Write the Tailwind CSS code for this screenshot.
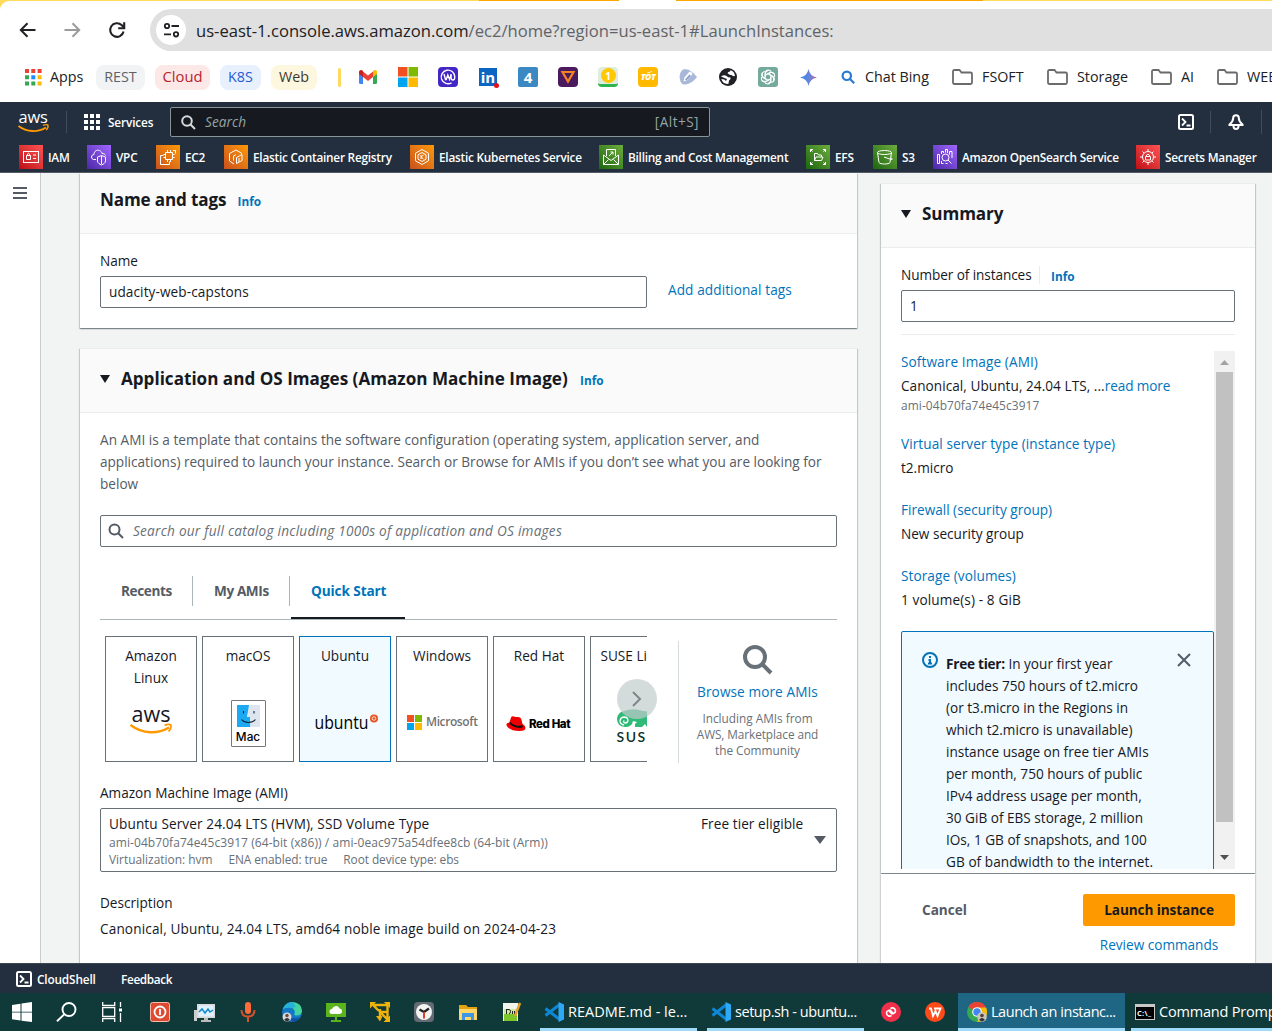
<!DOCTYPE html>
<html lang="en">
<head>
<meta charset="utf-8">
<title>Launch an instance | EC2 | us-east-1</title>
<script src="https://cdn.jsdelivr.net/npm/@tailwindcss/browser@4"></script>
</head>
<body class="flex h-[1031px] w-[1272px] flex-col overflow-hidden whitespace-nowrap bg-[#f2f3f3] font-['Open_Sans',sans-serif] text-[13.6px] leading-[22px] text-[#16191f]">

<!-- Browser tab strip edge -->
<div class="flex h-px shrink-0 bg-[#ffdb5c]">
  <div class="ml-[479px] w-[140px] bg-[#ffa500]"></div>
  <div class="w-[57px] bg-white"></div>
  <div class="w-[307px] bg-[#ffa500]"></div>
</div>

<!-- Browser toolbar -->
<div class="h-[101px] shrink-0 bg-[#ffdb5c]">
  <div class="h-full rounded-tl-[9px] bg-white pt-2">
    <div class="flex h-[42px] items-center">
      <svg class="ml-[19px] size-[18px]" viewBox="0 0 18 18" fill="none" stroke="#202124" stroke-width="2"><path d="M16.5 9H2M8.5 2.3L1.8 9l6.7 6.7"/></svg>
      <svg class="ml-[26px] size-[18px]" viewBox="0 0 18 18" fill="none" stroke="#9b9b9b" stroke-width="2"><path d="M1.5 9H16M9.5 2.3L16.2 9l-6.7 6.7"/></svg>
      <svg class="ml-[27px] size-[18px]" viewBox="0 0 18 18" fill="none" stroke="#202124" stroke-width="2.1"><path d="M15.6 10.6A6.8 6.8 0 1 1 13.6 4L16 6.4"/><path d="M16.2 1.2v6h-6"/></svg>
      <div class="ml-6 flex h-[42px] flex-1 items-center rounded-l-full bg-[#e0e0e0] pl-[6px]">
        <div class="flex size-[30px] items-center justify-center rounded-full bg-white">
          <svg class="size-[17px]" viewBox="0 0 17 17" fill="none" stroke="#202124" stroke-width="1.8"><circle cx="4" cy="4" r="2.2"/><path d="M8.5 4H16M1 12.3h7"/><circle cx="13" cy="12.3" r="2.2"/></svg>
        </div>
        <div class="ml-[10px] mt-0.5 text-[16.6px] leading-6 text-[#5f6368]"><span class="text-[#202124]">us-east-1.console.aws.amazon.com</span>/ec2/home?region=us-east-1#LaunchInstances:</div>
      </div>
    </div>

    <!-- Bookmarks -->
    <div class="mt-[13px] flex h-[26px] items-center text-[14.3px] leading-[23px] text-[#202124]">
      <svg class="ml-[25px] size-[17px]" viewBox="0 0 17 17"><path fill="#ea4335" d="M0 0h4v4H0zM6.3 0h4v4h-4zM12.6 0h4v4h-4z"/><path fill="#34a853" d="M0 6.3h4v4H0zM0 12.6h4v4H0zM6.3 12.6h4v4h-4z"/><path fill="#1a8cff" d="M6.3 6.3h4v4h-4z"/><path fill="#fbbc05" d="M12.6 6.3h4v4h-4zM12.6 12.6h4v4h-4z"/></svg>
      <div class="mb-0.5 ml-2 w-[46px]">Apps</div>
      <div class="flex h-[25px] w-[49px] justify-center rounded-lg bg-[#f1f3f4] text-[#5f6368]">REST</div>
      <div class="ml-[10px] flex h-[25px] w-[55px] justify-center rounded-lg bg-[#fce8e6] text-[14.8px] text-[#b8232f]">Cloud</div>
      <div class="ml-[10px] flex h-[25px] w-[41px] justify-center rounded-lg bg-[#e8f0fe] text-[#2a5bd0]">K8S</div>
      <div class="ml-[10px] flex h-[25px] w-[46px] justify-center rounded-lg bg-[#fef7e0] text-[#3c3a30]">Web</div>
      <div class="ml-[21px] h-[19px] w-[3px] rounded-sm bg-[#ffd95e]"></div>
      <svg class="ml-[18px] h-[14px] w-[18px]" viewBox="0 0 18 14"><path fill="#4285f4" d="M0 2.5V12.500Q0 14 1.500 14H4V5z"/><path fill="#34a853" d="M18 2.500V12.500Q18 14 16.500 14H14V5z"/><path fill="#ea4335" d="M4 7V1.500L9 5.400 14 1.500V7L9 11z"/><path fill="#c5221f" d="M0 4V2C0 .2 2.200-.7 4 1v6z"/><path fill="#fbbc04" d="M18 4V2C18 .2 15.800-.7 14 1v6z"/></svg>
      <svg class="ml-[21px] size-5" viewBox="0 0 20 20"><path fill="#f25022" d="M0 0h9.500v9.500H0z"/><path fill="#7fba00" d="M10.500 0H20v9.500h-9.500z"/><path fill="#00a4ef" d="M0 10.500h9.500V20H0z"/><path fill="#ffb900" d="M10.500 10.500H20V20h-9.500z"/></svg>
      <svg class="ml-5 size-5" viewBox="0 0 20 20" fill="none"><rect width="20" height="20" rx="4" fill="#4326c4"/><path d="M13.500 15.800A6.800 6.800 0 1 1 16.800 10c0 2-.8 3-2 3-1.300 0-1.800-1.200-1.800-3.500V7" stroke="#fff" stroke-width="1.400"/><path d="M6 7l1.500 5.500h.8L9.800 8l1.800 4.500L13 8" stroke="#fff" stroke-width="1.400"/></svg>
      <div class="relative ml-[21px] flex h-[18px] w-[18px] items-center justify-center bg-[#0a66c2] text-[15px] font-bold leading-none text-white">in<div class="absolute -bottom-0.5 -right-0.5 size-[5px] rounded-full bg-[#e0101f]"></div></div>
      <div class="ml-[21px] flex size-5 items-center justify-center rounded-[2px] bg-[#3b88c3] text-[15px] font-bold leading-none text-white">4</div>
      <svg class="ml-5 size-5" viewBox="0 0 20 20" fill="none"><rect width="20" height="20" rx="4" fill="#4b1a5e"/><path d="M4.500 5h11L10 14.500z" stroke="#f58220" stroke-width="2.200"/></svg>
      <div class="ml-5 flex size-5 items-center justify-center rounded-[4px] border-b-[3px] border-[#2db551] bg-[#dfece0]"><div class="flex size-[15px] items-center justify-center rounded-full bg-[#ffc800] text-[10px] font-bold leading-none text-white">1</div></div>
      <div class="ml-5 flex size-5 items-center justify-center rounded-[4px] bg-[#ffba00] text-[8.500px] font-extrabold italic leading-5 tracking-[-0.4px] text-white">TỐT</div>
      <svg class="ml-5 h-4 w-[19px]" viewBox="0 0 19 16"><path fill="#a9b7d8" d="M5 .5C10-.5 14 2 19 8c-4 5-9 8-14 7.500C1 13 0 4 5 .5z"/><path d="M5.500 12.500l1-4 5-6q2.500 0 3 2.500l-5 6z" fill="#fff"/><path d="M7 10.500l4.500-5 1.500 1.500-4.500 4.500z" fill="#8fa0cc"/></svg>
      <svg class="ml-[22px] size-[18px]" viewBox="0 0 18 18"><circle cx="9" cy="9" r="9" fill="#202124"/><path fill="#fff" d="M2 8.500Q5 6.500 7.500 8q1.500 1.500 4 1.500.5 2-1.500 3l-.5 3.300Q4 16.500 2.300 11l3 .5L7 13l1-2-2.500-1zM8.500 5Q9 3.500 11 3.500l.5-1.300Q15.500 3.500 16 8q-2.500.5-3.500-1-2 .5-4-2z"/></svg>
      <svg class="ml-[21px] size-5" viewBox="0 0 20 20" fill="none"><rect width="20" height="20" rx="3" fill="#74aa9c"/><g stroke="#fff" stroke-width="1.100"><path id="k" d="M7.200 10V6.200q.3-3 3-3.200 2 .1 3 1.600M7.200 8.300l4-2.300q2.800-1.300 4.600 1"/><use href="#k" transform="rotate(60 10 10)"/><use href="#k" transform="rotate(120 10 10)"/><use href="#k" transform="rotate(180 10 10)"/><use href="#k" transform="rotate(240 10 10)"/><use href="#k" transform="rotate(300 10 10)"/></g></svg>
      <svg class="ml-[22px] size-[17px]" viewBox="0 0 17 17"><defs><linearGradient id="gem"><stop stop-color="#2f8bf0"/><stop offset=".6" stop-color="#6d83d8"/><stop offset="1" stop-color="#c76a80"/></linearGradient></defs><path fill="url(#gem)" d="M8.500 0Q9.800 7.200 17 8.500 9.800 9.800 8.500 17 7.200 9.800 0 8.500 7.200 7.200 8.500 0z"/></svg>
      <svg class="ml-[24px] size-[14px]" viewBox="0 0 14 14" fill="none" stroke="#2a7bd0" stroke-width="2.200"><circle cx="5.800" cy="5.800" r="4.200"/><path d="M9 9l4.200 4.200"/></svg>
      <div class="mb-0.5 ml-[10px] w-[87px]">Chat Bing</div>
      <svg class="h-4 w-[21px]" viewBox="0 0 21 16" fill="none" stroke="#6b6b6b" stroke-width="1.800"><path d="M1 13.500v-11Q1 1 2.500 1H7.500l2 2.500h9Q20 3.500 20 5v8.500Q20 15 18.500 15h-16Q1 15 1 13.500z"/></svg>
      <div class="mb-0.5 ml-[9px] w-[65px]">FSOFT</div>
      <svg class="h-4 w-[21px]" viewBox="0 0 21 16" fill="none" stroke="#6b6b6b" stroke-width="1.800"><path d="M1 13.500v-11Q1 1 2.500 1H7.500l2 2.500h9Q20 3.500 20 5v8.500Q20 15 18.500 15h-16Q1 15 1 13.500z"/></svg>
      <div class="mb-0.5 ml-[9px] w-[74px]">Storage</div>
      <svg class="h-4 w-[21px]" viewBox="0 0 21 16" fill="none" stroke="#6b6b6b" stroke-width="1.800"><path d="M1 13.500v-11Q1 1 2.500 1H7.500l2 2.500h9Q20 3.500 20 5v8.500Q20 15 18.500 15h-16Q1 15 1 13.500z"/></svg>
      <div class="mb-0.5 ml-[9px] w-9">AI</div>
      <svg class="h-4 w-[21px] shrink-0" viewBox="0 0 21 16" fill="none" stroke="#6b6b6b" stroke-width="1.800"><path d="M1 13.500v-11Q1 1 2.500 1H7.500l2 2.500h9Q20 3.500 20 5v8.500Q20 15 18.500 15h-16Q1 15 1 13.500z"/></svg>
      <div class="mb-0.5 ml-[9px] w-[24px]">WEB</div>
    </div>
  </div>
</div>

<!-- AWS navigation -->
<header class="h-[71px] shrink-0 border-b border-[#545b64] bg-[#232f3e] text-[11.8px] font-semibold tracking-[-0.230px] text-white">
  <div class="flex h-10 items-center">
    <svg class="ml-[18px] h-[24px] w-[31px] overflow-visible" viewBox="0 0 31 24" fill="none"><text x="0.500" y="12.500" font-size="17" font-weight="500" textLength="29" lengthAdjust="spacingAndGlyphs" fill="#fff">aws</text><path d="M.5 16C9 22.500 20 22.500 28 17.500" stroke="#f90" stroke-width="1.900"/><path d="M25 15.300c2-.7 4-.7 4.800-.3.500 1-.2 3.500-1.600 5" stroke="#f90" stroke-width="1.400"/></svg>
    <div class="ml-[17px] h-[22px] w-px bg-[#414d5c]"></div>
    <svg class="ml-[17px] size-4" viewBox="0 0 16 16" fill="#fff"><path d="M0 0h4v4H0zM6 0h4v4H6zM12 0h4v4h-4zM0 6h4v4H0zM6 6h4v4H6zM12 6h4v4h-4zM0 12h4v4H0zM6 12h4v4H6zM12 12h4v4h-4z"/></svg>
    <div class="ml-2 w-[62px] tracking-[-0.130px]">Services</div>
    <div class="flex h-[30px] w-[540px] items-center rounded-[2px] border border-[#879596] bg-[#161920] pl-[10px] pr-[10px] text-[13.6px] font-normal text-[#95a5a6]">
      <svg class="size-[15px]" viewBox="0 0 15 15" fill="none" stroke="#d5dbdb" stroke-width="2"><circle cx="6" cy="6" r="4.800"/><path d="M9.500 9.500l4.500 4.500"/></svg>
      <span class="ml-[9px] flex-1 italic tracking-[0.100px]">Search</span><span class="tracking-[0.450px]">[Alt+S]</span>
    </div>
    <svg class="ml-[468px] size-4" viewBox="0 0 16 16" fill="none" stroke="#fff" stroke-width="2"><rect x="1" y="1" width="14" height="14" rx="1.500"/><path d="M4 4.500L7.500 8 4 11.500M8.500 11.500h4" stroke-width="1.800"/></svg>
    <div class="ml-4 h-[22px] w-px bg-[#414d5c]"></div>
    <svg class="ml-[17px] size-4" viewBox="0 0 16 16" fill="none" stroke="#fff" stroke-width="2"><path d="M8 1.300c-1.500 0-2.800 1.200-2.800 2.700 0 3-1.200 4.500-3.700 6.500v.5h13v-.5c-2.500-2-3.700-3.500-3.700-6.500 0-1.500-1.300-2.700-2.800-2.700z"/><path d="M5.500 12c0 2 1 3 2.500 3s2.500-1 2.500-3"/></svg>
    <div class="ml-[17px] h-6 w-px bg-[#414d5c]"></div>
  </div>
  <div class="flex h-[30px] items-center pl-[19px]">
    <div class="flex w-[68px] items-center gap-[5px]">
      <svg class="size-6 bg-gradient-to-tr from-[#bd0816] to-[#ff5252]" viewBox="0 0 24 24" fill="none" stroke="#fff"><rect x="4.500" y="6.500" width="15" height="11"/><path d="M7.500 10.500h4v4h-4zM8.500 10.500V9q1-1.500 2 0v1.500M14 10h3M14 13.500h3"/></svg>IAM</div>
    <div class="flex w-[69px] items-center gap-[5px]">
      <svg class="size-6 bg-gradient-to-tr from-[#4d27a8] to-[#a166ff]" viewBox="0 0 24 24" fill="none" stroke="#fff"><path d="M9 14.500H6.500q-2-.5-2-2.500c0-1.500 1-2.300 2.500-2.500C7 6 10 4.500 12.500 5.500c1.500.7 2.500 2 2.500 3 2 0 3 .5 3.500 2"/><path d="M14.500 10.500l4 1.500v4c0 2-2 3-4 4-2-1-4-2-4-4v-4zM14.500 11v8"/></svg>VPC</div>
    <div class="flex w-[68px] items-center gap-[5px]">
      <svg class="size-6 bg-gradient-to-tr from-[#c8511b] to-[#f90]" viewBox="0 0 24 24" fill="none" stroke="#fff"><path d="M9.500 7.500h7v7h-7zM11.500 7.500V5M14.500 7.500V5M11.500 17v-2.500M14.500 17v-2.500M9.500 9.500H7.500M9.500 12.500H7.500M16.500 9.500h2M16.500 12.500h2M17 5.500h2.500v3M7.500 10.500h-3v9h9v-3"/></svg>EC2</div>
    <div class="flex w-[186px] items-center gap-[5px]">
      <svg class="size-6 bg-gradient-to-tr from-[#c8511b] to-[#f90]" viewBox="0 0 24 24" fill="none" stroke="#fff"><path d="M10 19L5.500 16V8.500L12 5l6 3.500"/><path d="M9.500 15.500V11L12 9.500M12.500 18.500v-6l5.500-3v6zM15 17v-4"/></svg>Elastic Container Registry</div>
    <div class="flex w-[189px] items-center gap-[5px]">
      <svg class="size-6 bg-gradient-to-tr from-[#c8511b] to-[#f90]" viewBox="0 0 24 24" fill="none" stroke="#fff"><path d="M12 4.500l6.500 3.700v7.600L12 19.500l-6.500-3.700V8.200z"/><path d="M12 7.500l4 2.300v4.400l-4 2.300-4-2.300V9.800zM11 10v4M13.500 10L11 12l2.500 2"/></svg>Elastic Kubernetes Service</div>
    <div class="flex w-[207px] items-center gap-[5px]">
      <svg class="size-6 bg-gradient-to-tr from-[#1b660f] to-[#6cae3e]" viewBox="0 0 24 24" fill="none" stroke="#fff"><path d="M7.500 11V4.500h9V11M4.500 10v9.500h15V10M4.500 10l7.500 5.500 7.500-5.500M4.500 19.500l5-5M19.500 19.500l-5-5M10 11l4-4M11.500 7H14v2.500"/></svg>Billing and Cost Management</div>
    <div class="flex w-[67px] items-center gap-[5px]">
      <svg class="size-6 bg-gradient-to-tr from-[#1b660f] to-[#6cae3e]" viewBox="0 0 24 24" fill="none" stroke="#fff"><path d="M8.500 15.500v-7h3l1 1.500h3v2M8.500 15.500l1.500-3.500h7l-1.500 3.500zM4.500 7V4.500H7M17 4.500h2.500V7M4.500 17v2.500H7M17 19.500h2.500V17M4.500 4.500l2 2M4.500 19.500l2-2M19.500 19.500l-2-2M19.500 4.500l-2 2"/></svg>EFS</div>
    <div class="flex w-[60px] items-center gap-[5px]">
      <svg class="size-6 bg-gradient-to-tr from-[#1b660f] to-[#6cae3e]" viewBox="0 0 24 24" fill="none" stroke="#fff"><ellipse cx="11.500" cy="7.500" rx="7" ry="2"/><path d="M4.500 7.500l1.500 10c1 2 10 2 11 0l1.500-10M11 12l7 2.500c2 .3 1.500-.8 0-1.500"/></svg>S3</div>
    <div class="flex w-[203px] items-center gap-[5px]">
      <svg class="size-6 bg-gradient-to-tr from-[#4d27a8] to-[#a166ff]" viewBox="0 0 24 24" fill="none" stroke="#fff"><path d="M4.500 18.500V9.500h2v9zM8.500 9V6.500h2V8M12.500 7.500v-3h2v3.500M16.500 9.500v-3h2.500V13M8.500 16v2.500h2M12.500 18.500h2"/><circle cx="12.500" cy="12.500" r="3.500"/><path d="M15 15l3.500 3.500"/></svg>Amazon OpenSearch Service</div>
    <div class="flex items-center gap-[5px]">
      <svg class="size-6 bg-gradient-to-tr from-[#bd0816] to-[#ff5252]" viewBox="0 0 24 24" fill="none" stroke="#fff"><circle cx="12" cy="12" r="5.500"/><path d="M9.500 11.500h5v3.500h-5zM10.500 11.500V10q1.500-1.500 3 0v1.500M12 6.500v-2.500M12 20v-2.500M4 12h2.500M17.500 12H20M6.500 6.500L8 8M17.500 6.500L16 8M6.500 17.500L8 16M17.500 17.500L16 16"/></svg>Secrets Manager</div>
  </div>
</header>

<!-- Page -->
<main class="flex h-[790px] shrink-0 overflow-hidden">
  <nav class="w-[41px] shrink-0 border-r border-[#c6cbcc] bg-white pl-[13px] pt-[14px]">
    <svg class="h-3 w-[14px]" viewBox="0 0 14 12" fill="#545b64"><path d="M0 0h14v2H0zM0 5h14v2H0zM0 10h14v2H0z"/></svg>
  </nav>

  <div class="ml-[39px] w-[777px] shrink-0">
    <section class="h-[155px] bg-white shadow-[0_1px_1px_0_rgba(0,28,36,.3),1px_1px_1px_0_rgba(0,28,36,.15),-1px_1px_1px_0_rgba(0,28,36,.15)]">
      <div class="flex h-[61px] items-baseline border-b border-[#eaeded] bg-[#fafafa] px-5 pt-4">
        <h2 class="w-[137.5px] text-[17.1px] font-bold tracking-[-0.15px]">Name and tags</h2><a class="text-[11.800px] font-bold text-[#0073bb]">Info</a>
      </div>
      <div class="px-5 pt-4">
        <div>Name</div>
        <div class="mt-[4px] flex">
          <div class="flex h-8 w-[547px] items-center rounded-[2px] border border-[#687078] pl-2 tracking-[0.100px]">udacity-web-capstons</div>
          <a class="ml-[21px] mt-[3px] tracking-[0.1px] text-[#0073bb]">Add additional tags</a>
        </div>
      </div>
    </section>

    <section class="mt-5 h-[700px] border-t border-[#eaeded] bg-white shadow-[0_1px_1px_0_rgba(0,28,36,.3),1px_1px_1px_0_rgba(0,28,36,.15),-1px_1px_1px_0_rgba(0,28,36,.15)]">
      <div class="flex h-16 items-baseline border-b border-[#eaeded] bg-[#fafafa] px-5 pt-[19px]">
        <svg class="h-[8px] w-[10px] -translate-y-[2px]" viewBox="0 0 10 8" fill="#16191f"><path d="M0 0h10L5 8z"/></svg>
        <h2 class="ml-[11px] w-[459px] text-[17.1px] font-bold">Application and OS Images (Amazon Machine Image)</h2><a class="text-[11.800px] font-bold text-[#0073bb]">Info</a>
      </div>
      <div class="px-5 pt-4">
        <p class="text-[#545b64]"><span class="tracking-[0.030px]">An AMI is a template that contains the software configuration (operating system, application server, and</span><br>applications) required to launch your instance. Search or Browse for AMIs if you don’t see what you are looking for<br>below</p>
        <div class="mt-5 flex h-8 items-center rounded-[2px] border border-[#687078] pl-[7px] text-[#687078]">
          <svg class="size-4" viewBox="0 0 16 16" fill="none" stroke="#545b64" stroke-width="2"><circle cx="6.500" cy="6.500" r="5"/><path d="M10.200 10.200L15 15"/></svg>
          <span class="ml-[9px] italic tracking-[0.240px]">Search our full catalog including 1000s of application and OS images</span>
        </div>

        <!-- Tabs -->
        <div class="flex h-[73px] border-b border-[#aab7b8] pt-[29px] font-bold text-[#545b64]">
          <div class="h-[30px] w-[93px] border-r border-[#aab7b8] pl-[21px] leading-[30px] tracking-[-0.400px]">Recents</div>
          <div class="h-[30px] w-[97px] border-r border-[#aab7b8] pl-[21px] leading-[30px] tracking-[-0.400px]">My AMIs</div>
          <div class="ml-px h-[43px] w-[114px] border-b-2 border-[#16191f] pl-5 leading-[30px] tracking-[-0.1px] text-[#0073bb]">Quick Start</div>
        </div>

        <!-- Quick start tiles -->
        <div class="flex h-[143px] pt-4">
          <div class="relative ml-[5px] w-[542px] shrink-0">
            <div class="flex gap-[5px] overflow-hidden text-center">
              <div class="h-[126px] w-[92px] shrink-0 border border-[#687078] pt-2">Amazon<br>Linux
                <svg class="mx-auto mt-[18px] h-[28px] w-[42px] overflow-visible" viewBox="0 0 42 28" fill="none"><text x="1.500" y="15" font-size="21" font-weight="500" textLength="39" lengthAdjust="spacingAndGlyphs" fill="#16191f">aws</text><path d="M.5 18C13 27.500 28 27 39 20.500" stroke="#f90" stroke-width="2.400"/><path d="M34.500 18.300c3-1 5.500-1 6.300-.3.500 1.500-.5 4.500-2.300 6.300" stroke="#f90" stroke-width="1.800"/></svg>
              </div>
              <div class="h-[126px] w-[92px] shrink-0 border border-[#687078] pt-2">macOS
                <div class="mx-auto mt-[33px] h-[47px] w-[35px] rounded-[1px] border border-[#777] pt-[4px] font-['Inter'] text-[11.800px] font-medium leading-[20px] text-black">
                  <svg class="mx-auto h-[22px] w-[23px]" viewBox="0 0 23 22" fill="none"><path d="M0 0h13l-3 12h3l.5 10H0z" fill="#1ba9f2"/><path d="M12 0h11v22H13.500L13 12h-3z" fill="#dde6f0"/><path d="M4.500 14.500c3.500 4 10.500 4 14 0M6.500 6v2.500M17 6v2.500" stroke="#123" stroke-width="1.100"/></svg>Mac
                </div>
              </div>
              <div class="h-[126px] w-[92px] shrink-0 border border-[#0073bb] bg-[#f1faff] pt-2">Ubuntu
                <div class="mt-[44px] flex justify-center text-black"><svg class="h-[22px] w-[62px] overflow-visible" viewBox="0 0 62 22"><text x="0.500" y="18" font-size="18" textLength="54" lengthAdjust="spacingAndGlyphs">ubuntu</text><circle cx="60" cy="7.500" r="4" fill="#e95420"/><circle cx="60" cy="7.500" r="1.800" fill="none" stroke="#fff" stroke-width=".8"/></svg></div>
              </div>
              <div class="h-[126px] w-[92px] shrink-0 border border-[#687078] pt-2">Windows
                <div class="mt-[43px] flex items-center pl-[10px] pt-px text-[12px] font-semibold tracking-[-0.400px] text-[#737373]"><svg class="mr-1 size-[15px]" viewBox="0 0 15 15"><path fill="#f25022" d="M0 0h7v7H0z"/><path fill="#7fba00" d="M8 0h7v7H8z"/><path fill="#00a4ef" d="M0 8h7v7H0z"/><path fill="#ffb900" d="M8 8h7v7H8z"/></svg>Microsoft</div>
              </div>
              <div class="h-[126px] w-[92px] shrink-0 border border-[#687078] pt-2">Red Hat
                <div class="mt-[46px] flex items-center pl-[12px] font-['Inter'] text-[11.500px] font-extrabold tracking-[-0.400px] text-black"><svg class="mr-[3px] h-4 w-5" viewBox="0 0 20 16"><path fill="#e00" d="M5 1.500Q6-.5 8 .5q2 .8 4 .5Q15 1 15.500 4l1 4q3 1.500 3 4 0 3-6 3Q6 15 2 11.500 0 9.500 .5 8 1 6.500 3.500 6.500z"/><path d="M4 5.500l-.5 2c2 3 9 5.500 13 4V9C13 11 6 9 4 5.500z" fill="#111"/></svg>Red Hat</div>
              </div>
              <div class="h-[126px] w-[92px] shrink-0 border border-[#687078] pl-[9.500px] pt-2 text-left">SUSE Linux
                <svg class="ml-[16.500px] mt-[42px] h-[19px] w-[34px]" viewBox="0 0 34 19" fill="none"><path fill="#30ba78" d="M4 3Q15-2 26 2l8 1v15h-4l-2-3-3 3h-7v-3l2-2-4-1q-1 6-8 6-8-1-8-8 0-4 4-7z"/><path d="M7 16q-4-1-4-4 .5-4 4.500-4 3.500.5 3.500 3.500-.5 2.500-3 2.500-2-.5-1-2.500" stroke="#fff" stroke-width="1.300"/></svg>
                <div class="ml-4 font-['Lato'] text-[14px] font-semibold leading-[18px] tracking-[1.500px] text-[#0c322c]">SUSE</div>
              </div>
            </div>
            <div class="absolute left-[512px] top-[43px] flex size-10 items-center justify-center rounded-full bg-[#c2cccc]/70">
              <svg class="h-4 w-[10px]" viewBox="0 0 10 16" fill="none" stroke="#7f8688" stroke-width="2"><path d="M1 1l7 7-7 7"/></svg>
            </div>
          </div>
          <div class="ml-[31px] mt-[5px] flex h-[122px] w-[158px] flex-col items-center border-l border-[#d5dbdb] pt-[4px]">
            <svg class="h-[30px] w-[30px]" viewBox="0 0 30 30" fill="none" stroke="#687078" stroke-width="4"><circle cx="12" cy="12" r="10"/><path d="M19 19l9 9"/></svg>
            <a class="mt-[6px] tracking-[0.1px] text-[#0073bb]">Browse more AMIs</a>
            <p class="mt-[7px] text-center text-[11.800px] leading-4 text-[#687078]">Including AMIs from<br><span class="tracking-[-0.080px]">AWS, Marketplace and</span><br>the Community</p>
          </div>
        </div>

        <div class="mt-[19px]">Amazon Machine Image (AMI)</div>
        <div class="mt-[4px] flex h-16 rounded-[2px] border border-[#687078] px-2 pt-1">
          <div class="w-[592px]">
            <div class="tracking-[0.110px]">Ubuntu Server 24.04 LTS (HVM), SSD Volume Type</div>
            <div class="text-[12px] leading-4 tracking-[0.070px] text-[#687078]">ami-04b70fa74e45c3917 (64-bit (x86)) / ami-0eac975a54dfee8cb (64-bit (Arm))</div>
            <div class="flex gap-4 text-[11.900px] leading-4 text-[#687078]"><span>Virtualization: hvm</span><span class="tracking-[-0.080px]">ENA enabled: true</span><span class="tracking-[-0.080px]">Root device type: ebs</span></div>
          </div>
          <div class="w-[113px] tracking-[0.070px]">Free tier eligible</div>
          <svg class="mt-[23px] h-2 w-3" viewBox="0 0 12 8" fill="#545b64"><path d="M0 0h12L6 8z"/></svg>
        </div>
        <div class="mt-5">Description</div>
        <div class="mt-1 tracking-[0.140px]">Canonical, Ubuntu, 24.04 LTS, amd64 noble image build on 2024-04-23</div>
      </div>
    </section>
  </div>

  <!-- Summary -->
  <aside class="ml-6 mt-[10px] flex w-[374px] shrink-0 flex-col">
    <section class="h-[690px] shrink-0 border-t border-[#eaeded] bg-white shadow-[0_1px_1px_0_rgba(0,28,36,.3),1px_1px_1px_0_rgba(0,28,36,.15),-1px_1px_1px_0_rgba(0,28,36,.15)]">
      <div class="flex h-16 items-center border-b border-[#eaeded] bg-[#fafafa] px-5 pb-1">
        <svg class="h-[8px] w-[10px]" viewBox="0 0 10 8" fill="#16191f"><path d="M0 0h10L5 8z"/></svg>
        <h2 class="ml-[11px] text-[17.1px] font-bold tracking-[-0.100px]">Summary</h2>
      </div>
      <div class="px-5 pt-4">
        <div class="flex h-[22px] items-center"><span class="w-[138px] tracking-[-0.080px]">Number of instances</span><span class="h-[18px] w-px bg-[#eaeded]"></span><a class="ml-[11px] pt-px text-[11.800px] font-bold text-[#0073bb]">Info</a></div>
        <div class="mt-[4px] flex h-8 items-center rounded-[2px] border border-[#687078] pl-2">1</div>
        <div class="mt-3 h-px bg-[#eaeded]"></div>
        <div class="mt-4 flex h-[518px] overflow-hidden">
          <div class="w-[313px] shrink-0">
            <div class="tracking-[0.100px] text-[#0073bb]">Software Image (AMI)</div>
            <div class="mt-0.5"><span class="tracking-[0.050px]">Canonical, Ubuntu, 24.04 LTS, ...</span><a class="tracking-[-0.100px] text-[#0073bb]">read more</a></div>
            <div class="text-[11.900px] leading-4 tracking-[0.100px] text-[#687078]">ami-04b70fa74e45c3917</div>
            <div class="mt-5 tracking-[0.080px] text-[#0073bb]">Virtual server type (instance type)</div>
            <div class="mt-0.5">t2.micro</div>
            <div class="mt-5 text-[#0073bb]">Firewall (security group)</div>
            <div class="mt-0.5">New security group</div>
            <div class="mt-5 tracking-[0.080px] text-[#0073bb]">Storage (volumes)</div>
            <div class="mt-0.5 tracking-[0.120px]">1 volume(s) - 8 GiB</div>
            <div class="mt-5 flex rounded-t-[2px] border border-[#0073bb] bg-[#f1faff] pl-5 pt-[21px]">
              <svg class="-mt-px size-4" viewBox="0 0 16 16" fill="none" stroke="#0073bb" stroke-width="2"><circle cx="8" cy="8" r="7"/><path d="M8 11V8H6.500M6 11.500h4M8 4v2"/></svg>
              <p class="ml-2 w-[231px]"><b class="tracking-[-0.250px]">Free tier:</b> In your first year<br>includes 750 hours of t2.micro<br>(or t3.micro in the Regions in<br>which t2.micro is unavailable)<br>instance usage on free tier AMIs<br>per month, 750 hours of public<br>IPv4 address usage per month,<br>30 GiB of EBS storage, 2 million<br>IOs, 1 GB of snapshots, and 100<br><span class="tracking-[0.060px]">GB of bandwidth to the internet.</span></p>
              <svg class="size-[14px]" viewBox="0 0 14 14" fill="none" stroke="#545b64" stroke-width="2"><path d="M1 1l12 12M13 1L1 13"/></svg>
            </div>
          </div>
          <div class="flex w-[21px] flex-col items-center bg-[#f1f1f1]">
            <svg class="mb-[7px] mt-[9px] h-[5px] w-[9px] shrink-0" viewBox="0 0 9 5" fill="#a3a3a3"><path d="M4.500 0L9 5H0z"/></svg>
            <div class="h-[450px] w-[17px] shrink-0 bg-[#c1c1c1]"></div>
            <svg class="mt-[33px] h-[5px] w-[9px] shrink-0" viewBox="0 0 9 5" fill="#505050"><path d="M0 0h9L4.500 5z"/></svg>
          </div>
        </div>
      </div>
    </section>
    <section class="mt-px flex h-[110px] shrink-0 justify-between bg-white pl-[41px] pr-5 pt-5 shadow-[1px_1px_1px_0_rgba(0,28,36,.15),-1px_1px_1px_0_rgba(0,28,36,.15)]">
      <div class="font-bold leading-8 text-[#545b64]">Cancel</div>
      <div class="w-[152px]">
        <div class="h-8 rounded-[2px] bg-[#f90] text-center font-bold leading-8 tracking-[-0.1px]">Launch instance</div>
        <div class="mt-2 text-center text-[#0073bb]">Review commands</div>
      </div>
    </section>
  </aside>
</main>

<!-- Console footer -->
<footer class="flex h-[30px] shrink-0 items-center border-t border-[#3b4654] bg-[#232f3e] pl-4 text-[11.800px] font-semibold tracking-[-0.150px] text-white">
  <svg class="size-4" viewBox="0 0 16 16" fill="none" stroke="#fff" stroke-width="2"><rect x="1" y="1" width="14" height="14" rx="1.500"/><path d="M4 4.500L7.500 8 4 11.500M8.500 11.500h4" stroke-width="1.800"/></svg>
  <div class="ml-[5px] w-[84px]">CloudShell</div>
  <div class="tracking-[-0.350px]">Feedback</div>
</footer>

<!-- Windows taskbar -->
<div class="flex h-[38px] shrink-0 items-center bg-[#103a3a] pl-3 text-[14.500px] text-white">
  <svg class="size-5 shrink-0" viewBox="0 0 20 20" fill="#fff"><path d="M0 3l8.500-1.300v8H0zM9.500 1.500L20 0v9.700H9.500zM0 10.600h8.500v8L0 17.300zM9.500 10.600H20V20L9.500 18.700z"/></svg>
  <svg class="ml-6 h-5 w-[21px] shrink-0" viewBox="0 0 21 20" fill="none" stroke="#fff" stroke-width="1.900"><circle cx="13" cy="7.500" r="6.500"/><path d="M8.300 12.200L1 19.300"/></svg>
  <svg class="ml-[25px] size-5 shrink-0" viewBox="0 0 20 20" fill="none" stroke="#fff" stroke-width="1.300"><path d="M.7 0v3.300h12V0M.7 20v-3.300h12V20M.7 5.500v9h12v-9zM18.500 0v5M18.500 11v9"/><path d="M17 6.500h3v3h-3z" fill="#fff" stroke="none"/></svg>
  <svg class="ml-[28px] size-5 shrink-0" viewBox="0 0 20 20" fill="none"><rect x=".5" y=".5" width="19" height="19" rx="2" fill="#dc4b32" stroke="#f7b8a8"/><circle cx="10" cy="10" r="5.500" stroke="#fff" stroke-width="1.800"/><path d="M10 7v6" stroke="#fff" stroke-width="1.800"/></svg>
  <svg class="ml-6 size-[21px] shrink-0" viewBox="0 0 21 21" fill="none"><path d="M0 8h3v11H0z" fill="#ccc"/><path d="M3 2h18v14H3z" fill="#d8d8d8"/><path d="M4.500 3.500h15v11h-15z" fill="#dff1ff"/><path d="M5 10l3-3 3 4 3-4 2 3 3-2" stroke="#1388c9" stroke-width="1.500"/><path d="M10 16h4v2h3v2H7v-2h3z" fill="#bbb"/></svg>
  <svg class="ml-[25px] h-5 w-4 shrink-0" viewBox="0 0 16 20" fill="none"><rect x="5" y="0" width="6" height="12" rx="3" fill="#ff6a39"/><path d="M1.500 8q0 6.500 6.500 6.500T14.500 8M8 14.500V20" stroke="#d3532c" stroke-width="2"/></svg>
  <svg class="ml-[26px] size-5 shrink-0" viewBox="0 0 20 20"><circle cx="10" cy="10" r="10" fill="#1478c8"/><path d="M1 7Q4 0 10.500 0 20 1 20 9q-1 5-6 4.500-3-.5-1-3Q12 5.500 8 5.500 3 5 1 7z" fill="#43d3a0"/><path d="M1 7Q4 0 10.500 0L14 5q-2 1-4 .8Q5 4.500 1 7z" fill="#27b0dd"/><path d="M8 8q-3 6 3 8 4 1 7-1-3 5-8 5L7 13z" fill="#0f52a8"/><circle cx="5" cy="15" r="4.500" fill="#d8d8dc"/><circle cx="5" cy="13.500" r="1.700" fill="#6a4a3a"/><path d="M2 18q3-4 6 0l-3 1.500z" fill="#333"/></svg>
  <svg class="ml-6 size-5 shrink-0" viewBox="0 0 20 20"><path d="M0 1h20v14H0zM9 15h2v3h4v2H5v-2h4z" fill="#5cb41c"/><path d="M6 12a2.500 2.500 0 0 1 0-5 4 4 0 0 1 7.500-.5A2.800 2.800 0 0 1 14 12z" fill="#fff"/></svg>
  <svg class="ml-6 size-5 shrink-0" viewBox="0 0 20 20" fill="none" stroke="#efb40c" stroke-width="2.400"><path d="M3 3h14M17.500 3v14.500M3 3l6 6M10 7v10M9 10h8M11 11l6.500 6.500"/><path d="M0 0h6L0 6.500zM14 0h6v6zM20 13.500V20h-6.500zM6 14l4 5.500 2.500-5.500z" fill="#efb40c" stroke="none"/></svg>
  <svg class="ml-6 size-5 shrink-0" viewBox="0 0 20 20" fill="none"><rect width="20" height="20" rx="4" fill="#646b73"/><circle cx="10" cy="10" r="8" fill="#f3f3f3"/><path d="M10 10l5-3.500M10 10L5.500 7.500" stroke="#222" stroke-width="2.200"/><path d="M10 10v6.500" stroke="#d9402e" stroke-width="2"/></svg>
  <svg class="ml-6 size-5 shrink-0" viewBox="0 0 20 20"><path d="M1 3h7l2 2h9v13H1z" fill="#e3a211"/><path d="M1 7h18v11H1z" fill="#ffd767"/><path d="M4 18v-7h12v7h-3v-3H7v3z" fill="#3e97e6"/></svg>
  <svg class="ml-6 size-5 shrink-0" viewBox="0 0 20 20" fill="none"><path d="M1 1h15v18H1z" fill="#f2f4ee"/><path d="M2 12h13v7H2z" fill="#7dc62c"/><path d="M2 7h13v5H2z" fill="#cdeaa5"/><path d="M4.500 7v5M4.500 7.500h2.500q1.500 0 1.500 2T7 12M10.500 9v3M12.500 9v3" stroke="#222"/><path d="M18 1l-5 13" stroke="#e6a02b" stroke-width="2.500"/></svg>

  <div class="ml-[18px] flex h-full w-[157px] shrink-0 items-center border-b-[3px] border-[#a0dcfa] pl-1 pt-[3px]">
    <svg class="size-5" viewBox="0 0 20 20" fill="none"><path d="M15 3L1.500 13.500M15 17L1.500 6.500" stroke="#0d86d3" stroke-width="3"/><path d="M14.500 0L20 2.500v15L14.500 20z" fill="#2fa8f5"/></svg>
    <span class="ml-1">README.md - le...</span>
  </div>
  <div class="ml-[10px] flex h-full w-[157px] shrink-0 items-center border-b-[3px] border-[#a0dcfa] pl-1 pt-[3px]">
    <svg class="size-5" viewBox="0 0 20 20" fill="none"><path d="M15 3L1.500 13.500M15 17L1.500 6.500" stroke="#0d86d3" stroke-width="3"/><path d="M14.500 0L20 2.500v15L14.500 20z" fill="#2fa8f5"/></svg>
    <span class="ml-1 tracking-[-0.450px]">setup.sh - ubuntu...</span>
  </div>
  <svg class="ml-[17px] size-5 shrink-0" viewBox="0 0 20 20" fill="none" stroke="#fff" stroke-width="1.600"><circle cx="10" cy="10" r="10" fill="#f0304a" stroke="none"/><path d="M11.500 12.500L7.500 8.500Q5.500 9 5.500 11t2 3q1.500.5 3-.5M8.500 7.500l4 4q2-.5 2-2.500t-2-3q-1.500-.5-3 .5"/></svg>
  <svg class="ml-6 size-5 shrink-0" viewBox="0 0 20 20" fill="none" stroke="#fff" stroke-width="1.800"><circle cx="10" cy="10" r="10" fill="#ff4a1a" stroke="none"/><path d="M4 6.500h2L8 14l2.500-5 2 5L15.500 6.500H9"/></svg>
  <div class="ml-[13px] flex h-full w-[167px] shrink-0 items-center border-b-[3px] border-[#a0dcfa] bg-[#1f6685] pl-[9px] pt-[3px]">
    <svg class="size-5" viewBox="0 0 20 20"><circle cx="10" cy="10" r="10" fill="#34a853"/><path d="M1.300 5A10 10 0 0 1 18.700 5L10 10z" fill="#ea4335"/><path d="M10 5.500h9A10 10 0 0 1 10 20l4-7z" fill="#fbbc05"/><circle cx="10" cy="10" r="4.800" fill="#fff"/><circle cx="10" cy="10" r="3.700" fill="#4285f4"/><circle cx="15" cy="15" r="4.800" fill="#c9c4bc"/><circle cx="15" cy="13.500" r="1.800" fill="#5a4334"/><path d="M12 18q3-4 6 0l-3 1.500z" fill="#333"/></svg>
    <span class="ml-1 tracking-[-0.450px]">Launch an instanc...</span>
  </div>
  <div class="ml-[6px] flex h-full w-[141px] shrink-0 items-center overflow-hidden border-b-[3px] border-[#a0dcfa] pl-1 pt-[3px]">
    <svg class="h-4 w-5 shrink-0" viewBox="0 0 20 16"><path d="M0 0h20v16H0z" fill="#c8c8c8"/><path d="M1 3h18v12H1z" fill="#000"/><text x="2" y="11.500" font-size="7.500" font-weight="700" fill="#fff" textLength="14">C:\_</text></svg>
    <span class="ml-1 tracking-[-0.200px]">Command Prompt</span>
  </div>
</div>
</body>
</html>
